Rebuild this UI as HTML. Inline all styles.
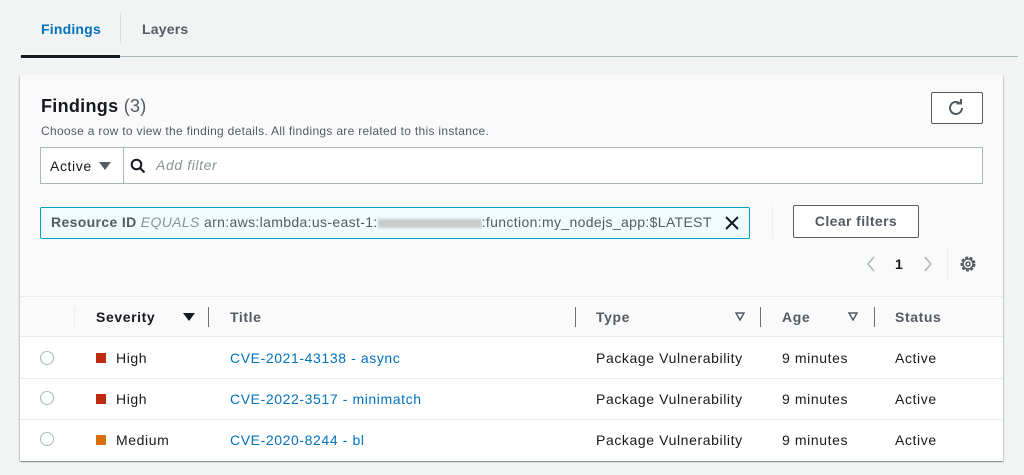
<!DOCTYPE html>
<html><head><style>
*{margin:0;padding:0;box-sizing:border-box}
body{width:1024px;height:475px;background:#f2f3f3;font-family:"Liberation Sans",Arial,sans-serif;color:#16191f;position:relative;overflow:hidden;font-size:14px;letter-spacing:0.6px}
.a{position:absolute;white-space:nowrap}
.b{font-weight:bold}
</style></head><body>
<div class="a b" style="left:41px;top:21px;color:#0073bb;font-size:14px;letter-spacing:0.2px">Findings</div>
<div class="a" style="left:120px;top:13px;width:1px;height:30px;background:#d5dbdb"></div>
<div class="a b" style="left:142px;top:21px;color:#545b64;font-size:14px;letter-spacing:0.2px">Layers</div>
<div class="a" style="left:20px;top:56px;width:998px;height:1px;background:#aab7b8"></div>
<div class="a" style="left:21px;top:55px;width:99px;height:3px;background:#16191f"></div>

<div class="a" style="left:20px;top:75px;width:983px;height:386px;background:#fafafa;box-shadow:0 1px 1px rgba(0,28,36,.3),1px 1px 1px rgba(0,28,36,.15),-1px 1px 1px rgba(0,28,36,.15)"></div>
<div class="a" style="left:41px;top:96px;font-size:18px;font-weight:bold;letter-spacing:0.3px">Findings <span style="font-weight:normal;color:#545b64">(3)</span></div>
<div class="a" style="left:41px;top:124px;font-size:12px;color:#545b64;letter-spacing:0.3px">Choose a row to view the finding details. All findings are related to this instance.</div>
<div class="a" style="left:931px;top:92px;width:52px;height:32px;border:1px solid #545b64;background:#fff;border-radius:2px"></div>
<svg class="a" style="left:946px;top:98px" width="20" height="20" viewBox="0 0 20 20"><path d="M16 10a6 6 0 1 1-1.8-4.3" fill="none" stroke="#545b64" stroke-width="2"/><path d="M10.5 5.5h4.5V1" fill="none" stroke="#545b64" stroke-width="2"/></svg>

<div class="a" style="left:40px;top:147px;width:943px;height:37px;border:1px solid #aab7b8;background:#fff"></div>
<div class="a" style="left:123px;top:147px;width:1px;height:37px;background:#aab7b8"></div>
<div class="a" style="left:50px;top:158px;font-size:14px">Active</div>
<svg class="a" style="left:99px;top:161px" width="12" height="10"><path d="M0 1h12L6 9z" fill="#545b64"/></svg>
<svg class="a" style="left:130px;top:158px" width="16" height="16"><circle cx="6.5" cy="6.5" r="4.8" fill="none" stroke="#16191f" stroke-width="2"/><path d="M10 10l4.5 4.5" stroke="#16191f" stroke-width="2"/></svg>
<div class="a" style="left:156px;top:157px;font-style:italic;color:#879596">Add filter</div>

<div class="a" style="left:40px;top:207px;width:710px;height:32px;border:1px solid #00a1c9;background:#f1faff;border-radius:2px"></div>
<div class="a" style="left:51px;top:214px;color:#545b64;letter-spacing:0.35px"><b>Resource ID</b> <i style="color:#879596">EQUALS</i> arn:aws:lambda:us-east-1:<span style="display:inline-block;width:104px;height:9px;background:#c8cccd;vertical-align:middle;filter:blur(1px)"></span>:function:my_nodejs_app:$LATEST</div>
<svg class="a" style="left:725px;top:216px" width="14" height="14"><path d="M1 1l12 12M13 1L1 13" stroke="#16191f" stroke-width="2"/></svg>
<div class="a" style="left:772px;top:206px;width:1px;height:32px;background:#eaeded"></div>
<div class="a b" style="left:793px;top:205px;width:126px;height:33px;border:1px solid #545b64;background:#fff;border-radius:2px;text-align:center;line-height:31px;color:#545b64;letter-spacing:0.4px">Clear filters</div>

<svg class="a" style="left:865px;top:255px" width="12" height="18"><path d="M9 2L3 9l6 7" fill="none" stroke="#aab7b8" stroke-width="1.5"/></svg>
<div class="a b" style="left:895px;top:256px">1</div>
<svg class="a" style="left:922px;top:255px" width="12" height="18"><path d="M3 2l6 7-6 7" fill="none" stroke="#aab7b8" stroke-width="1.5"/></svg>
<div class="a" style="left:947px;top:248px;width:1px;height:32px;background:#eaeded"></div>
<svg class="a" style="left:959px;top:255px" width="18" height="18" viewBox="0 0 18 18"><circle cx="9" cy="9" r="6.5" fill="none" stroke="#545b64" stroke-width="2" stroke-dasharray="3 1.6"/><circle cx="9" cy="9" r="5" fill="none" stroke="#545b64" stroke-width="1.5"/><circle cx="9" cy="9" r="2" fill="none" stroke="#545b64" stroke-width="1.5"/></svg>

<div class="a" style="left:20px;top:296px;width:983px;height:1px;background:#eaeded"></div>
<div class="a" style="left:20px;top:337px;width:983px;height:124px;background:#fff"></div>
<div class="a" style="left:20px;top:336px;width:983px;height:1px;background:#eaeded"></div>
<div class="a" style="left:20px;top:378px;width:983px;height:1px;background:#eaeded"></div>
<div class="a" style="left:20px;top:419px;width:983px;height:1px;background:#eaeded"></div>

<div class="a" style="left:74px;top:307px;width:1px;height:20px;background:#eaeded"></div>
<div class="a b" style="left:96px;top:309px">Severity</div>
<svg class="a" style="left:183px;top:312px" width="12" height="10"><path d="M0 1h12L6 9z" fill="#16191f"/></svg>
<div class="a" style="left:208px;top:307px;width:1px;height:20px;background:#687078"></div>
<div class="a b" style="left:230px;top:309px;color:#545b64">Title</div>
<div class="a" style="left:575px;top:307px;width:1px;height:20px;background:#687078"></div>
<div class="a b" style="left:596px;top:309px;color:#545b64">Type</div>
<svg class="a" style="left:735px;top:312px" width="10" height="9"><path d="M1 1h8L5 8z" fill="none" stroke="#545b64" stroke-width="1.5"/></svg>
<div class="a" style="left:760px;top:307px;width:1px;height:20px;background:#687078"></div>
<div class="a b" style="left:782px;top:309px;color:#545b64">Age</div>
<svg class="a" style="left:848px;top:312px" width="10" height="9"><path d="M1 1h8L5 8z" fill="none" stroke="#545b64" stroke-width="1.5"/></svg>
<div class="a" style="left:874px;top:307px;width:1px;height:20px;background:#687078"></div>
<div class="a b" style="left:895px;top:309px;color:#545b64">Status</div>

<div class="a" style="left:40px;top:351px;width:14px;height:14px;border:1.5px solid #aab7b8;border-radius:50%"></div>
<div class="a" style="left:96px;top:353px;width:10px;height:10px;background:#bd2c0f"></div>
<div class="a" style="left:116px;top:350px">High</div>
<div class="a" style="left:230px;top:350px;color:#0073bb">CVE-2021-43138 - async</div>
<div class="a" style="left:596px;top:350px">Package Vulnerability</div>
<div class="a" style="left:782px;top:350px">9 minutes</div>
<div class="a" style="left:895px;top:350px">Active</div>

<div class="a" style="left:40px;top:391px;width:14px;height:14px;border:1.5px solid #aab7b8;border-radius:50%"></div>
<div class="a" style="left:96px;top:394px;width:10px;height:10px;background:#bd2c0f"></div>
<div class="a" style="left:116px;top:391px">High</div>
<div class="a" style="left:230px;top:391px;color:#0073bb">CVE-2022-3517 - minimatch</div>
<div class="a" style="left:596px;top:391px">Package Vulnerability</div>
<div class="a" style="left:782px;top:391px">9 minutes</div>
<div class="a" style="left:895px;top:391px">Active</div>

<div class="a" style="left:40px;top:432px;width:14px;height:14px;border:1.5px solid #aab7b8;border-radius:50%"></div>
<div class="a" style="left:96px;top:435px;width:10px;height:10px;background:#dd6b10"></div>
<div class="a" style="left:116px;top:432px">Medium</div>
<div class="a" style="left:230px;top:432px;color:#0073bb">CVE-2020-8244 - bl</div>
<div class="a" style="left:596px;top:432px">Package Vulnerability</div>
<div class="a" style="left:782px;top:432px">9 minutes</div>
<div class="a" style="left:895px;top:432px">Active</div>
</body></html>
